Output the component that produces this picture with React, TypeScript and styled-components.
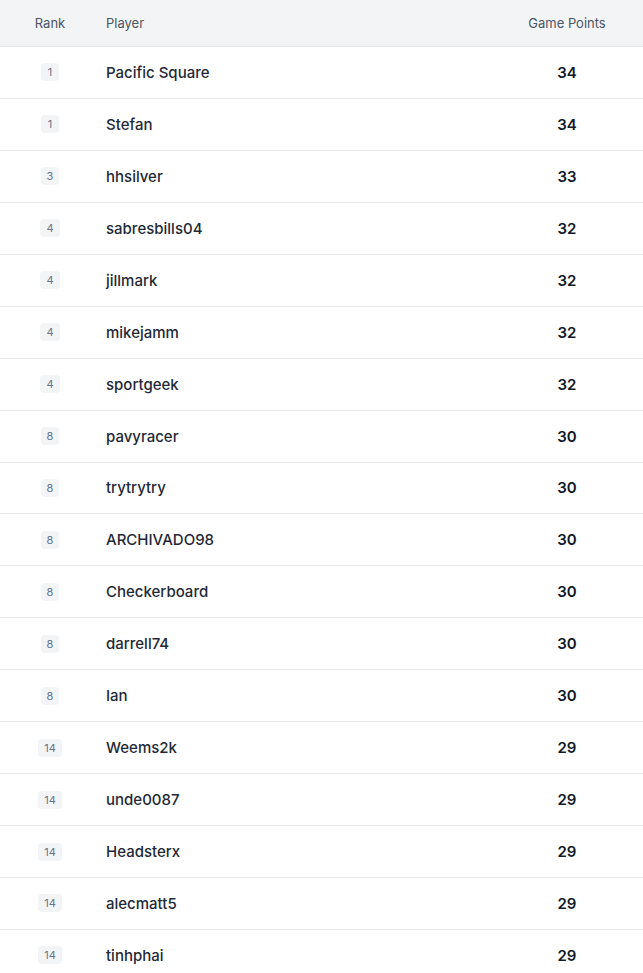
import styled, { createGlobalStyle } from "styled-components";

const GlobalStyle = createGlobalStyle`
  body {
    margin: 0;
    background: #ffffff;
    font-family: Inter, "Noto Sans", sans-serif;
  }
`;

const Table = styled.div`
  width: 643px;
`;

const Row = styled.div<{ $head?: boolean }>`
  display: grid;
  grid-template-columns: 100px 1fr 152px;
  align-items: center;
  height: ${(p) => (p.$head ? "46px" : "50.94px")};
  background: ${(p) => (p.$head ? "#f3f4f6" : "#ffffff")};
  border-bottom: 1px solid #e5e7eb;
`;

const HeadCell = styled.div<{ $align: "center" | "left" }>`
  font-size: 13px;
  color: #4b5563;
  text-align: ${(p) => p.$align};
  padding-left: ${(p) => (p.$align === "left" ? "6px" : "0")};
`;

const RankCell = styled.div`
  display: flex;
  justify-content: center;
`;

const Badge = styled.span`
  display: inline-flex;
  align-items: center;
  justify-content: center;
  min-width: 18px;
  height: 18px;
  padding: 0 6px;
  box-sizing: border-box;
  border-radius: 4px;
  background: #f3f4f6;
  color: #64748b;
  font-size: 11px;
`;

const Name = styled.div`
  padding-left: 6px;
  font-size: 15px;
  font-weight: 500;
  color: #1f2937;
`;

const Points = styled.div`
  text-align: center;
  font-size: 15px;
  font-weight: 600;
  color: #111827;
`;

const players: [number, string, number][] = [
  [1, "Pacific Square", 34],
  [1, "Stefan", 34],
  [3, "hhsilver", 33],
  [4, "sabresbills04", 32],
  [4, "jillmark", 32],
  [4, "mikejamm", 32],
  [4, "sportgeek", 32],
  [8, "pavyracer", 30],
  [8, "trytrytry", 30],
  [8, "ARCHIVADO98", 30],
  [8, "Checkerboard", 30],
  [8, "darrell74", 30],
  [8, "Ian", 30],
  [14, "Weems2k", 29],
  [14, "unde0087", 29],
  [14, "Headsterx", 29],
  [14, "alecmatt5", 29],
  [14, "tinhphai", 29],
];

export default function App() {
  return (
    <>
      <GlobalStyle />
      <Table>
        <Row $head>
          <HeadCell $align="center">Rank</HeadCell>
          <HeadCell $align="left">Player</HeadCell>
          <HeadCell $align="center">Game Points</HeadCell>
        </Row>
        {players.map(([rank, name, pts], i) => (
          <Row key={i}>
            <RankCell>
              <Badge>{rank}</Badge>
            </RankCell>
            <Name>{name}</Name>
            <Points>{pts}</Points>
          </Row>
        ))}
      </Table>
    </>
  );
}
